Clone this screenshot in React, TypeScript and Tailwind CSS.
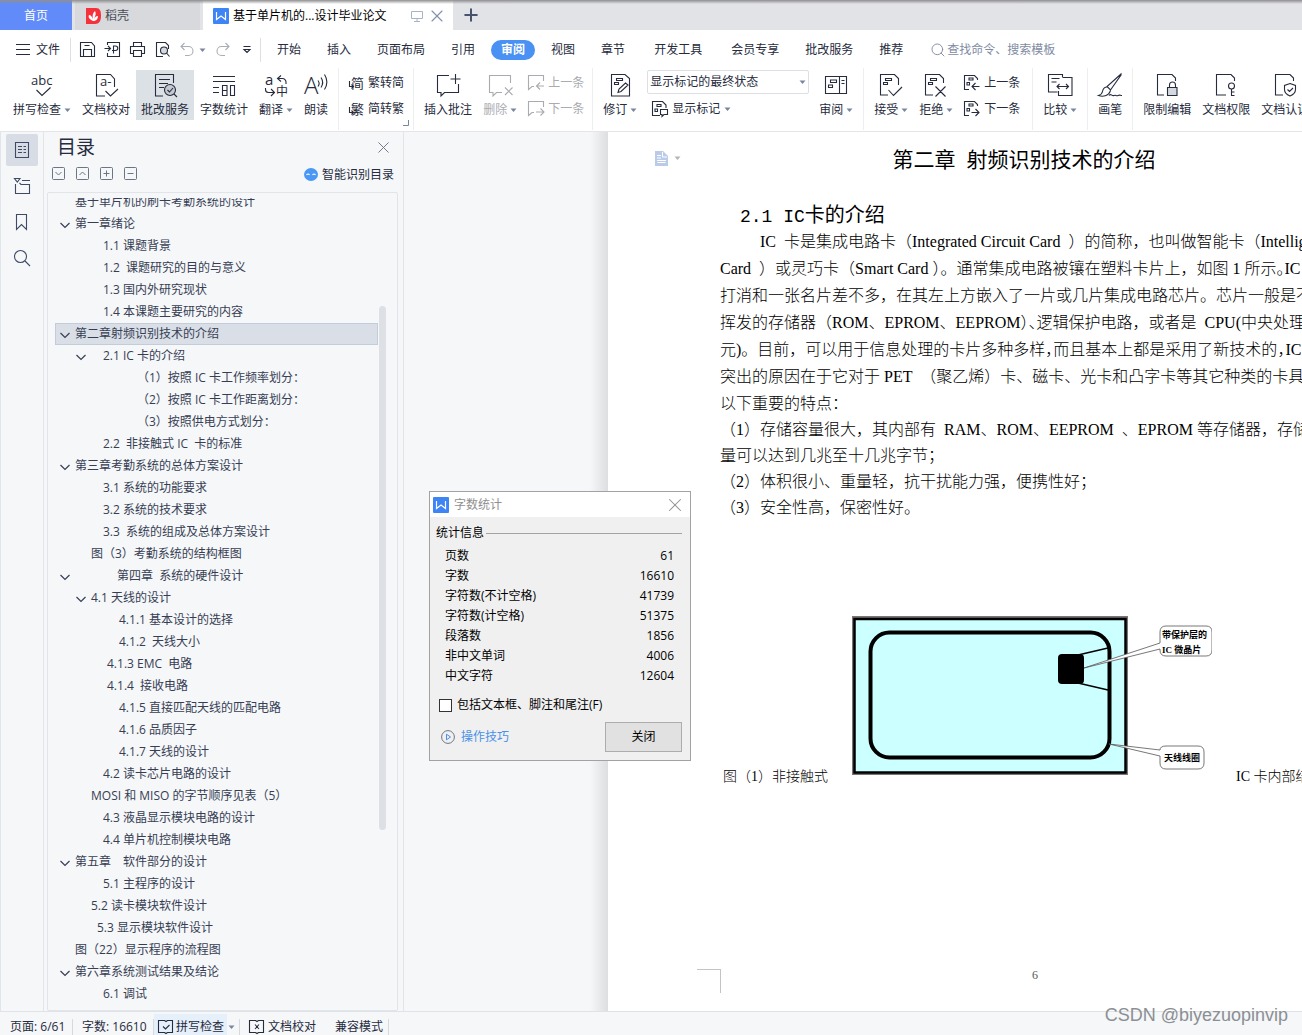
import { Plus, Search, X } from "lucide-react";
import React from "react";

type IconProps = { children: React.ReactNode; size?: "md" | "lg" };

// Icon: shared wrapper for the 1px line drawings
const Icon = ({ children, size = "lg" }: IconProps) => (
  <svg
    className={`shrink-0 overflow-visible ${size === "lg" ? "w-6 h-6" : "w-4 h-4"}`}
    viewBox={size === "lg" ? "0 0 24 24" : "0 0 16 16"}
    fill="none"
    stroke="currentColor"
    strokeWidth="1.1"
    aria-hidden="true"
  >
    {children}
  </svg>
);

const Glyph = ({ x, y, size, children }: { x: number; y: number; size: number; children: string }) => (
  <text x={x} y={y} fontSize={size} fill="currentColor" stroke="none">
    {children}
  </text>
);

const Caret = ({ className = "text-[#7a869d]" }: { className?: string }) => (
  <svg className={`w-[7px] h-[7px] shrink-0 ${className}`} viewBox="0 0 7 7" aria-hidden="true">
    <path d="M.5 1.500h6L3.500 5z" fill="currentColor" />
  </svg>
);

const WpsLogo = () => (
  <svg className="w-4 h-4 shrink-0" viewBox="0 0 16 16" aria-hidden="true">
    <rect width="16" height="16" rx="1" fill="#3d84f5" />
    <path d="M3.500 4v7.500L8 8l4.500 3.500V4" fill="none" stroke="#fff" strokeWidth="1.2" />
  </svg>
);

const icons = {
  spell: (
    <Icon>
      <Glyph x={1} y={11} size={13}>abc</Glyph>
      <path d="M6.500 16l5.500 5.500 8.500-8" />
    </Icon>
  ),
  proof: (
    <Icon>
      <path d="M20.500 13V5L16.500.500H2.500v21.500H11M11.500 17l5 5 7.500-7" />
      <Glyph x={6} y={12} size={13}>a-</Glyph>
    </Icon>
  ),
  correct: (
    <Icon>
      <path d="M20.500 9V.500H2.500v21.500H10M6 5.500h11M6 9.500h9M6 13.500h5" />
      <circle cx="17" cy="16" r="5.500" fill="#c3c9d1" />
      <path d="M14.500 16l2 2 3.500-4M21 20l3 3" />
    </Icon>
  ),
  count: (
    <Icon>
      <path d="M1 2.500h22M1 7.500h22M1 13.500h6M1 18.500h6M10.500 11.500h4.500v10h-4.500zM10.500 16.500h4.500M18.500 11.500h4v10h-4z" />
    </Icon>
  ),
  translate: (
    <Icon>
      <Glyph x={1} y={11} size={15}>a</Glyph>
      <Glyph x={12} y={22} size={12}>中</Glyph>
      <path d="M17 1.500l-3.500 3 3.500 3M13.500 4.500h5a3.500 3.500 0 0 1 3.500 3.500v2M1.500 14v1.500a3 3 0 0 0 3 3H10M7 15l3.500 3.500L7 22" />
    </Icon>
  ),
  read: (
    <Icon>
      <path d="M14 6.500a5 5 0 0 1 0 6M17 3.500a9 9 0 0 1 0 10M20.500 .500a14 14 0 0 1 0 15" />
      <g fontWeight="300">
        <Glyph x={0} y={20} size={24}>A</Glyph>
      </g>
    </Icon>
  ),
  comment: (
    <Icon>
      <path d="M13 1.500H1.500v17H5V22l3.500-3.500h14V10M19.500 0v10M14.500 5h10" />
    </Icon>
  ),
  commentDelete: (
    <Icon>
      <path d="M22.500 9V1.500H1.500v17H5V22l3.500-3.500H14M17 13.500l7.500 7.500M24.500 13.500L17 21" />
    </Icon>
  ),
  commentPrev: (
    <Icon size="md">
      <path d="M15.500 6V.500h-15v14l3.500-3H6M16 11H8.500M12 7.500L8.500 11l3.500 3.500" />
    </Icon>
  ),
  commentNext: (
    <Icon size="md">
      <path d="M15.500 6V.500h-15v14l3.500-3H6M8 11h8M12.500 7.500L16 11l-3.500 3.500" />
    </Icon>
  ),
  revise: (
    <Icon>
      <path d="M3.500.500H17l4.500 4v17.500h-18zM8.500 4.500h6v2h-6zM6.500 8.500h4v2h-4zM10 18.500l1-3.500 6.500-6 2.500 2-7 6.500z" />
    </Icon>
  ),
  markup: (
    <Icon size="md">
      <path d="M8 14.500H.500V.500h10L14 4v3M5 3.500h4v2H5zM3 8h2.500v2.500H3zM8.500 8.500h7v5H12l-2 2v-2H8.500z" />
    </Icon>
  ),
  pane: (
    <Icon>
      <path d="M1.500 2.500h21v17h-21zM15.500 2.500v17M17.500 6.500h3M17.500 9.500h3M6.500 6h6v2.500h-6zM4.500 11h4v2.500h-4z" />
    </Icon>
  ),
  accept: (
    <Icon>
      <path d="M19.500 11V4.500l-4-4H1.500v20.500H9M9.500 16l5 5.500 8.500-8.500M6.500 4.500h6v2h-6zM4.500 8.500h4v2h-4z" />
    </Icon>
  ),
  reject: (
    <Icon>
      <path d="M19.500 9V4.500l-4-4H1.500v20.500H9M11.500 12.500l10 10M21.500 12.500l-10 10M6.500 4.500h6v2h-6zM4.500 8.500h4v2h-4z" />
    </Icon>
  ),
  changePrev: (
    <Icon size="md">
      <path d="M13.500 5V3.500l-3-3H.500v14H5M15.500 11.500H8M11.500 8L8 11.500l3.500 3.500M5 3h4v2H5zM3 7.500h2.500V10H3z" />
    </Icon>
  ),
  changeNext: (
    <Icon size="md">
      <path d="M13.500 5V3.500l-3-3H.500v14H5M7.500 11.500H15M11.500 8l3.500 3.500-3.500 3.500M5 3h4v2H5zM3 7.500h2.500V10H3z" />
    </Icon>
  ),
  compare: (
    <Icon>
      <path d="M14.500 3V.500H.500v17.500h9M3.500 4.500h8M3.500 8h5M14.500 3.500h9.500v18H10.500V17M9 12.500h11.500M11.500 10L9 12.500l2.500 2.500M18 10l2.500 2.500L18 15" />
    </Icon>
  ),
  brush: (
    <Icon>
      <path d="M23 0L9 12.500l3.500 3.500L23 1zM9 13c-3 0-4 2-4.500 4.500C4 20 2.500 21 .500 21.500c4 1.500 10 1 12-5M11 21.500c2-2.500 3 1 5 0s2 1 4 0 2 0 4 0" />
    </Icon>
  ),
  restrict: (
    <Icon>
      <path d="M20.500 7V4L17 .500H2.500v20.500H9M14.500 13v-2a3 3 0 0 1 6 0v2" />
      <path d="M12.500 13.500h9.500v8h-9.500z" fill="#d5d9df" />
    </Icon>
  ),
  permission: (
    <Icon>
      <path d="M20.500 7V4L17 .500H2.500v20.500H12M17.500 15v7M17.500 18h3M17.500 21.500h3" />
      <circle cx="17.500" cy="12" r="3" />
    </Icon>
  ),
  certify: (
    <Icon>
      <path d="M20.500 7V4L17 .500H2.500v20.500H10M17 9.500l5.500 2v4c0 3-2 5-5.500 6.500-3.500-1.500-5.500-3.500-5.500-6.500v-4zM14.500 15.500l2 2 3.500-3.500" />
    </Icon>
  ),
  toSimple: (
    <Icon size="md">
      <Glyph x={3} y={13} size={13}>简</Glyph>
      <path d="M1.500 6v5.500h4M3.500 9.500l2 2-2 2" />
    </Icon>
  ),
  toTraditional: (
    <Icon size="md">
      <Glyph x={3} y={13} size={13}>繁</Glyph>
      <path d="M1.500 6v5.500h4M3.500 9.500l2 2-2 2" />
    </Icon>
  ),
};

// ---------- title tabs ----------

const TitleTabs = () => (
  <header className="relative flex h-[30px] shrink-0 bg-[#e2e3e7] text-xs leading-4">
    <button className="w-[72px] bg-[#608bf9] pt-px text-white">首页</button>
    <button className="ml-[3px] flex w-[125px] items-center gap-1 bg-[#d8d9dc] pt-px pl-[11px] text-[#4a4d55]">
      <svg className="w-[15px] h-4" viewBox="0 0 15 16" aria-hidden="true">
        <path d="M0 0h10c4 0 5 3 5 8s-2 8-6 8H0z" fill="#f5323c" />
        <path d="M7 13C3 11 2 9 3 7c2 0 3 2 4 4-1-4 0-6 2-8 1 2 1 4-1 8 1-2 2-3 4-3 0 3-2 5-5 5z" fill="#fff" />
      </svg>
      稻壳
    </button>
    <div className="ml-[3px] flex w-[250px] items-center bg-white pt-[2px] pl-[10px]">
      <WpsLogo />
      <span className="ml-1 w-[174px] text-black">基于单片机的...设计毕业论文</span>
      <svg className="ml-1 w-3 h-3 text-[#aab2c8]" viewBox="0 0 12 12" fill="none" stroke="currentColor" aria-hidden="true">
        <path d="M.500 1.500h11v7H.500zM6 8.500v3M3 11.500h6" />
      </svg>
      <button aria-label="关闭标签" className="ml-1 text-[#8590b0]">
        <X size={20} strokeWidth={1.4} />
      </button>
    </div>
    <button aria-label="新建" className="ml-2 text-[#49536e]">
      <Plus size={20} strokeWidth={2.4} />
    </button>
    <div className="absolute inset-x-0 top-0 h-1 bg-linear-to-b from-[#8f8f91] to-transparent" />
  </header>
);

// ---------- menu row ----------

const menuTabs = [
  { label: "开始" },
  { label: "插入" },
  { label: "页面布局" },
  { label: "引用" },
  { label: "审阅", active: true },
  { label: "视图" },
  { label: "章节" },
  { label: "开发工具", wide: true },
  { label: "会员专享" },
  { label: "批改服务" },
  { label: "推荐" },
];

const MenuRow = () => (
  <div className="flex h-[38px] shrink-0 items-center bg-white pt-[2px] pl-4 text-xs leading-4 text-[#262b3d]">
    <button className="flex items-center gap-[6px]">
      <svg className="w-[14px] h-[14px]" viewBox="0 0 14 14" stroke="currentColor" aria-hidden="true">
        <path d="M0 1.500h14M0 6.500h14M0 11.500h14" />
      </svg>
      文件
    </button>
    <div className="ml-[10px] flex h-6 items-center gap-[9px] border-x border-[#dcdfe4] pr-1 pl-[9px]">
      <button aria-label="保存">
        <Icon size="md">
          <path d="M.500.500h11L14.500 4v10.500H.500zM3.500 14V7.500h8V14M4.500 3.500h5" />
        </Icon>
      </button>
      <button aria-label="输出为PDF">
        <Icon size="md">
          <path d="M2.500 3V.500h12v14h-12V11M-.500 6.500h6M3 4l2.500 2.500L3 9M8.500 11.500V4h2a2 2 0 0 1 0 4.500H7" />
        </Icon>
      </button>
      <button aria-label="打印">
        <Icon size="md">
          <path d="M3.500 4.500V.500h8v4M3.500 11.500h-3v-7h14v7h-3M3.500 8.500h8v6h-8z" />
        </Icon>
      </button>
      <button aria-label="打印预览">
        <Icon size="md">
          <path d="M13.500 7V3.500L10.500 .500H1.500v14H8M11.500 11l3 3.500" />
          <circle cx="9" cy="8.500" r="3.500" fill="#d5d9df" />
        </Icon>
      </button>
      <button aria-label="撤销" className="flex items-center gap-[3px] text-[#a9adb5]">
        <Icon size="md">
          <path d="M4.500 1L1 4.500 4.500 8M1 4.500h7.500a4.500 4.500 0 0 1 0 9H5" />
        </Icon>
        <Caret />
      </button>
      <button aria-label="重做" className="text-[#a9adb5]">
        <Icon size="md">
          <path d="M10.500 1L14 4.500 10.500 8M14 4.500H6.500a4.500 4.500 0 0 0 0 9H10" />
        </Icon>
      </button>
      <button aria-label="自定义快速访问">
        <Icon size="md">
          <path d="M3.500 4.500h7M4 7.500l3 3 3-3z" />
        </Icon>
      </button>
    </div>
    <nav className="ml-4 flex items-center gap-[26px]">
      {menuTabs.map((tab) => (
        <button
          key={tab.label}
          className={
            tab.active
              ? "-mx-[10px] h-5 rounded-full bg-[#4991f2] px-[10px] font-bold text-white"
              : tab.wide
                ? "mx-[3px]"
                : ""
          }
        >
          {tab.label}
        </button>
      ))}
    </nav>
    <label className="ml-[27px] flex items-center gap-px text-[#7f8ba3]">
      <Search size={16} strokeWidth={1.4} />
      <input
        aria-label="查找命令"
        className="w-40 outline-none placeholder:text-[#7f8ba3]"
        placeholder="查找命令、搜索模板"
      />
    </label>
  </div>
);

// ---------- ribbon ----------

interface RibbonButtonProps {
  icon: React.ReactNode;
  label: string;
  caret?: boolean;
  active?: boolean;
  disabled?: boolean;
}

const RibbonButton = ({ icon, label, caret, active, disabled }: RibbonButtonProps) => (
  <button
    disabled={disabled}
    className={`flex h-[50px] shrink-0 flex-col items-center gap-1 px-[5px] pt-1 ${active ? "bg-[#dce1e6]" : ""} ${disabled ? "text-[#a9abb0]" : ""}`}
  >
    {icon}
    <span className="flex items-center gap-[3px]">
      {label}
      {caret && <Caret />}
    </span>
  </button>
);

const SmallButton = ({ icon, label, caret, disabled }: RibbonButtonProps) => (
  <button
    disabled={disabled}
    className={`flex h-6 shrink-0 items-center gap-1 px-[5px] pt-[2px] ${disabled ? "text-[#a9abb0]" : ""}`}
  >
    {icon}
    {label}
    {caret && <Caret />}
  </button>
);

const Group = ({ children, className = "px-[5px]" }: { children: React.ReactNode; className?: string }) => (
  <div className={`relative flex h-[62px] shrink-0 gap-px border-r border-[#eceef0] pt-[2px] ${className}`}>
    {children}
  </div>
);

const Ribbon = () => (
  <div className="relative z-10 flex h-16 shrink-0 overflow-hidden whitespace-nowrap border-b border-[#e3e5e8] bg-white text-xs leading-4 text-[#262b3d]">
    <Group className="pl-2 pr-[5px]">
      <RibbonButton icon={icons.spell} label="拼写检查" caret />
      <RibbonButton icon={icons.proof} label="文档校对" />
      <RibbonButton icon={icons.correct} label="批改服务" active />
      <RibbonButton icon={icons.count} label="字数统计" />
      <RibbonButton icon={icons.translate} label="翻译" caret />
      <RibbonButton icon={icons.read} label="朗读" />
    </Group>
    <Group className="px-1">
      <div className="flex flex-col gap-[2px]">
        <SmallButton icon={icons.toSimple} label="繁转简" />
        <SmallButton icon={icons.toTraditional} label="简转繁" />
      </div>
      <svg className="absolute right-1 bottom-1 w-[6px] h-[6px] text-[#7a869d]" viewBox="0 0 6 6" fill="none" stroke="currentColor" aria-hidden="true">
        <path d="M5.500 0v5.500H0" />
      </svg>
    </Group>
    <Group className="pl-[5px] pr-[3px]">
      <RibbonButton icon={icons.comment} label="插入批注" />
      <RibbonButton icon={icons.commentDelete} label="删除" caret disabled />
      <div className="flex flex-col gap-[2px]">
        <SmallButton icon={icons.commentPrev} label="上一条" disabled />
        <SmallButton icon={icons.commentNext} label="下一条" disabled />
      </div>
    </Group>
    <Group>
      <RibbonButton icon={icons.revise} label="修订" caret />
      <div className="mx-1 flex flex-col gap-[2px]">
        <div className="relative">
          <select
            aria-label="显示标记"
            className="h-6 w-[162px] appearance-none rounded-xs border border-[#dcdfe4] bg-white pl-[2px] text-xs"
          >
            <option>显示标记的最终状态</option>
          </select>
          <span className="pointer-events-none absolute top-[9px] right-[3px]">
            <Caret />
          </span>
        </div>
        <SmallButton icon={icons.markup} label="显示标记" caret />
      </div>
      <RibbonButton icon={icons.pane} label="审阅" caret />
    </Group>
    <Group className="pl-[5px] pr-[7px]">
      <RibbonButton icon={icons.accept} label="接受" caret />
      <RibbonButton icon={icons.reject} label="拒绝" caret />
      <div className="flex flex-col gap-[2px]">
        <SmallButton icon={icons.changePrev} label="上一条" />
        <SmallButton icon={icons.changeNext} label="下一条" />
      </div>
    </Group>
    <Group>
      <RibbonButton icon={icons.compare} label="比较" caret />
    </Group>
    <Group>
      <RibbonButton icon={icons.brush} label="画笔" />
    </Group>
    <Group>
      <RibbonButton icon={icons.restrict} label="限制编辑" />
      <RibbonButton icon={icons.permission} label="文档权限" />
      <RibbonButton icon={icons.certify} label="文档认证" />
    </Group>
  </div>
);

// ---------- left side ----------

const SideStrip = () => (
  <aside className="flex w-11 shrink-0 flex-col items-center gap-1 border-x border-[#e1e4e9] pt-[2px] text-[#3f4a66]">
    <button aria-label="目录" className="flex size-8 items-center justify-center rounded-xs bg-[#d8dde5]">
      <Icon size="md">
        <path d="M1.500.500h13v15h-13zM4 4.500h4M4 7.500h4M4 10.500h4M9.500 4.500H12M9.500 7.500H12M9.500 10.500H12" />
      </Icon>
    </button>
    <button aria-label="章节" className="flex size-8 items-center justify-center">
      <Icon size="md">
        <path d="M.500.500h5.500L3.300 4zM8 2.500h8M1.500 6v9.500h14v-9H7L5.500 5" />
      </Icon>
    </button>
    <button aria-label="书签" className="flex size-8 items-center justify-center">
      <Icon size="md">
        <path d="M2.500.500h10v15l-5-5-5 5z" />
      </Icon>
    </button>
    <button aria-label="查找" className="flex size-8 items-center justify-center">
      <Icon size="md">
        <circle cx="6.500" cy="6.500" r="6" />
        <path d="M11 11l5 5" />
      </Icon>
    </button>
  </aside>
);

interface OutlineItem {
  text: string;
  indent: string;
  chevron?: string;
  selected?: boolean;
}

const outline: OutlineItem[] = [
  { text: "基于单片机的刷卡考勤系统的设计", indent: "pl-5" },
  { text: "第一章绪论", indent: "pl-5", chevron: "left-1" },
  { text: "1.1 课题背景", indent: "pl-12" },
  { text: "1.2  课题研究的目的与意义", indent: "pl-12" },
  { text: "1.3 国内外研究现状", indent: "pl-12" },
  { text: "1.4 本课题主要研究的内容", indent: "pl-12" },
  { text: "第二章射频识别技术的介绍", indent: "pl-5", chevron: "left-1", selected: true },
  { text: "2.1 IC 卡的介绍", indent: "pl-12", chevron: "left-5" },
  { text: "（1）按照 IC 卡工作频率划分：", indent: "pl-[82px]" },
  { text: "（2）按照 IC 卡工作距离划分：", indent: "pl-[82px]" },
  { text: "（3）按照供电方式划分：", indent: "pl-[82px]" },
  { text: "2.2  非接触式 IC  卡的标准", indent: "pl-12" },
  { text: "第三章考勤系统的总体方案设计", indent: "pl-5", chevron: "left-1" },
  { text: "3.1 系统的功能要求", indent: "pl-12" },
  { text: "3.2 系统的技术要求", indent: "pl-12" },
  { text: "3.3  系统的组成及总体方案设计", indent: "pl-12" },
  { text: "图（3）考勤系统的结构框图", indent: "pl-9" },
  { text: "第四章  系统的硬件设计", indent: "pl-[62px]", chevron: "left-1" },
  { text: "4.1 天线的设计", indent: "pl-9", chevron: "left-5" },
  { text: "4.1.1 基本设计的选择", indent: "pl-16" },
  { text: "4.1.2  天线大小", indent: "pl-16" },
  { text: "4.1.3 EMC  电路", indent: "pl-13" },
  { text: "4.1.4  接收电路", indent: "pl-13" },
  { text: "4.1.5 直接匹配天线的匹配电路", indent: "pl-16" },
  { text: "4.1.6 品质因子", indent: "pl-16" },
  { text: "4.1.7 天线的设计", indent: "pl-16" },
  { text: "4.2 读卡芯片电路的设计", indent: "pl-12" },
  { text: "MOSI 和 MISO 的字节顺序见表（5）", indent: "pl-9" },
  { text: "4.3 液晶显示模块电路的设计", indent: "pl-12" },
  { text: "4.4 单片机控制模块电路", indent: "pl-12" },
  { text: "第五章　软件部分的设计", indent: "pl-5", chevron: "left-1" },
  { text: "5.1 主程序的设计", indent: "pl-12" },
  { text: "5.2 读卡模块软件设计", indent: "pl-9" },
  { text: "5.3 显示模块软件设计", indent: "pl-[42px]" },
  { text: "图（22）显示程序的流程图", indent: "pl-5" },
  { text: "第六章系统测试结果及结论", indent: "pl-5", chevron: "left-1" },
  { text: "6.1 调试", indent: "pl-12" },
];

const levelTools = [
  { label: "展开", d: "M3.500 5l3 3 3-3" },
  { label: "收缩", d: "M3.500 8l3-3 3 3" },
  { label: "升级", d: "M3.500 6.500h6M6.500 3.500v6" },
  { label: "降级", d: "M3.500 6.500h6" },
];

const OutlinePanel = () => (
  <section className="flex w-[360px] shrink-0 flex-col border-r border-[#e1e4e9] text-[#373e54]">
    <div className="flex h-7 items-center justify-between pt-[2px] pr-[10px] pl-[13px]">
      <h2 className="text-[19px] leading-7 text-[#262b3d]">目录</h2>
      <button aria-label="关闭目录" className="text-[#6d7484]">
        <X size={19} strokeWidth={1.2} />
      </button>
    </div>
    <div className="flex h-[27px] items-center gap-[11px] pr-[9px] pl-2">
      {levelTools.map((tool) => (
        <button key={tool.label} aria-label={tool.label} className="text-[#6d7484]">
          <svg className="w-[13px] h-[13px]" viewBox="0 0 13 13" fill="none" stroke="currentColor" aria-hidden="true">
            <rect x=".5" y=".5" width="12" height="12" rx="1" />
            <path d={tool.d} />
          </svg>
        </button>
      ))}
      <button className="ml-auto flex items-center gap-1 pt-[2px] text-xs leading-4 text-[#262b3d]">
        <svg className="w-[14px] h-[14px]" viewBox="0 0 14 14" aria-hidden="true">
          <ellipse cx="7" cy="6.500" rx="7" ry="6.500" fill="#4a97f5" />
          <path d="M2.500 7q1.500-2 3 0M8.500 7q1.500-2 3 0" fill="none" stroke="#fff" strokeWidth="1.200" />
        </svg>
        智能识别目录
      </button>
    </div>
    <div className="mt-[5px] mr-[5px] ml-[3px] flex min-h-0 flex-1 rounded-xs border border-[#e1e4e9] pt-[5px] pl-[7px]">
      <div className="min-h-0 flex-1 overflow-hidden">
        <ul className="-mt-[7px] text-xs">
          {outline.map((item) => (
            <li
              key={item.text}
              className={`relative h-[22px] whitespace-pre leading-[22px] ${item.indent} ${item.selected ? "bg-[#d9dee7] outline outline-[#c3ccd9] -outline-offset-1" : ""}`}
            >
              {item.chevron && (
                <svg className={`absolute top-2 w-3 h-2 ${item.chevron}`} viewBox="0 0 12 8" fill="none" stroke="currentColor" strokeWidth="1.200" aria-hidden="true">
                  <path d="M1.500 2L6 6.500 10.500 2" />
                </svg>
              )}
              <a href="#page">{item.text}</a>
            </li>
          ))}
        </ul>
      </div>
      <div className="mr-[11px] flex w-2 flex-col pt-[108px] pb-[180px]">
        <div className="ml-auto w-[7px] flex-1 rounded-full bg-[#dde1e5]" />
      </div>
    </div>
  </section>
);

// ---------- document ----------

// Half: full-width punctuation set in its half-width form at the end of a clause
const Half = ({ children }: { children: string }) => (
  <span className="[font-feature-settings:'halt']">{children}</span>
);

const introLines: React.ReactNode[] = [
  <>IC  卡是集成电路卡（Integrated Circuit Card  ）的简称，也叫做智能卡（Intelligent</>,
  <>Card  ）或灵巧卡（Smart Card ）。通常集成电路被镶在塑料卡片上，如图 1 所示<Half>。</Half>IC 卡的</>,
  <>打消和一张名片差不多，在其左上方嵌入了一片或几片集成电路芯片。芯片一般是不易</>,
  <>挥发的存储器（ROM、EPROM、EEPROM<Half>）、</Half>逻辑保护电路，或者是  CPU(中央处理单</>,
  <>元)。目前，可以用于信息处理的卡片多种多样<Half>，</Half>而且基本上都是采用了新技术的<Half>，</Half>IC 卡</>,
  <>突出的原因在于它对于 PET  （聚乙烯）卡、磁卡、光卡和凸字卡等其它种类的卡具有</>,
  <>以下重要的特点：</>,
];

const featureLines = [
  "（1）存储容量很大，其内部有  RAM、ROM、EEPROM  、EPROM 等存储器，存储容",
  "量可以达到几兆至十几兆字节；",
  "（2）体积很小、重量轻，抗干扰能力强，便携性好；",
  "（3）安全性高，保密性好。",
];

const CardFigure = () => (
  <svg className="w-[360px] h-[160px] shrink-0" viewBox="0 0 360 160" role="img" aria-label="非接触式IC卡内部结构">
    <rect x="1" y="1" width="274" height="157" fill="#ccffff" stroke="#777" strokeWidth="2" />
    <rect x="2.500" y="3" width="271" height="153.500" fill="none" stroke="#000" strokeWidth="2.500" />
    <rect x="18.500" y="16.500" width="239" height="125" rx="19" fill="none" stroke="#000" strokeWidth="4" />
    <path d="M226 39l30-7M226 67l30 7" stroke="#000" strokeWidth="1.300" />
    <rect x="206" y="38" width="26" height="30" rx="4" fill="#000" />
    <path
      d="M314 10h40q6 0 6 6v18q0 6-6 6h-40q-6 0-6-6l0-1-76 19 76-25v-11q0-6 6-6z"
      fill="#fff"
      stroke="#555"
      strokeWidth=".8"
    />
    <path
      d="M314 130h32q6 0 6 6v11q0 6-6 6h-32q-6 0-6-6v-7l-51-12 51 6q0-4 6-4z"
      fill="#fff"
      stroke="#555"
      strokeWidth=".8"
    />
    <g className="font-['Liberation_Serif','Noto_Sans_CJK_SC',serif] font-bold" fontSize="9">
      <text x="310" y="22">带保护层的</text>
      <text x="310" y="37">IC 微晶片</text>
      <text x="312" y="145">天线线圈</text>
    </g>
  </svg>
);

const DocumentArea = () => (
  <main id="page" className="flex min-w-0 flex-1 overflow-hidden">
    <div className="w-[186px] shrink-0" />
    <div className="w-[18px] shrink-0 bg-linear-to-r from-[#f5f7f9] to-[#dcdee0]" />
    <article className="relative flex w-[832px] shrink-0 flex-col bg-white pt-[13px] pl-28 text-black">
      <button aria-label="段落布局" className="absolute top-[19px] left-[47px] flex items-center gap-[6px]">
        <svg className="w-[13px] h-[15px]" viewBox="0 0 13 15" aria-hidden="true">
          <path d="M0 0h8l5 5v10H0z" fill="#b9cbe8" />
          <path d="M7.500 1v5H12M2 4.500h4M2 7h4M2 9.500h9M2.500 11.500h8" fill="none" stroke="#fff" />
        </svg>
        <Caret className="text-[#b5b5b5]" />
      </button>
      <h1 className="whitespace-pre pr-28 text-center text-[21px] leading-7">第二章  射频识别技术的介绍</h1>
      <h2 className="mt-[30px] flex h-[25px] items-baseline pl-5 text-xl leading-6">
        <span className="font-['Liberation_Mono',monospace] text-lg leading-6">2.1 IC</span>卡的介绍
      </h2>
      <div className="whitespace-pre font-['Liberation_Serif','Noto_Sans_CJK_SC',serif] text-base font-light">
        {introLines.map((line, index) => (
          <p key={index} className={`h-[27px] leading-[27px] ${index === 0 ? "pl-10" : ""}`}>
            {line}
          </p>
        ))}
        {featureLines.map((line) => (
          <p key={line} className="h-[26px] leading-[26px]">
            {line}
          </p>
        ))}
      </div>
      <div className="mt-[95px] flex items-end gap-6 whitespace-nowrap pl-[3px] font-['Liberation_Serif','Noto_Sans_CJK_SC',serif] text-sm font-light">
        <span className="-mb-[9px] leading-4">图（1）非接触式</span>
        <CardFigure />
        <span className="-mb-[9px] leading-4">IC 卡内部结构</span>
      </div>
      <footer className="mt-auto mb-[18px] -ml-[23px] flex h-6 text-[#555]">
        <div className="w-6 border-t border-r border-[#c4c4c4]" />
        <span className="ml-[311px] font-['Liberation_Serif',serif] text-xs leading-3">6</span>
      </footer>
    </article>
  </main>
);

// ---------- word count dialog ----------

const stats = [
  ["页数", "61"],
  ["字数", "16610"],
  ["字符数(不计空格)", "41739"],
  ["字符数(计空格)", "51375"],
  ["段落数", "1856"],
  ["非中文单词", "4006"],
  ["中文字符", "12604"],
];

const WordCountDialog = () => (
  <div
    role="dialog"
    aria-label="字数统计"
    className="absolute top-[491px] left-[429px] z-20 w-[262px] border border-[#a0a2a5] bg-[#f0f0f0] text-xs leading-4 text-black"
  >
    <div className="flex h-[25px] items-center bg-white pr-1 pl-[3px]">
      <WpsLogo />
      <span className="ml-[5px] text-[#8f8f8f]">字数统计</span>
      <button aria-label="关闭" className="ml-auto text-[#8f8f8f]">
        <X size={22} strokeWidth={1.1} />
      </button>
    </div>
    <div className="pt-2 pr-2 pb-2 pl-[6px]">
      <div className="flex items-center gap-[2px]">
        统计信息
        <span className="h-px flex-1 bg-[#a3a3a3]" />
      </div>
      <table className="mt-[5px] w-full">
        <tbody>
          {stats.map(([name, value]) => (
            <tr key={name} className="h-5">
              <th className="pl-[9px] text-left font-normal">{name}</th>
              <td className="pr-2 text-right">{value}</td>
            </tr>
          ))}
        </tbody>
      </table>
      <label className="mt-[11px] flex items-center gap-[5px] pl-[3px]">
        <input type="checkbox" className="size-[13px] appearance-none border border-[#333] bg-white" />
        包括文本框、脚注和尾注(F)
      </label>
      <div className="mt-[9px] flex items-center justify-between pl-[5px]">
        <a href="#tips" className="flex items-center gap-[6px] text-[#4a90e8]">
          <svg className="w-[14px] h-[14px]" viewBox="0 0 14 14" fill="none" aria-hidden="true">
            <circle cx="7" cy="7" r="6.400" stroke="#6d7484" />
            <path d="M5.500 4.200v5.600l4-2.800z" stroke="#4a90e8" />
          </svg>
          操作技巧
        </a>
        <button className="h-[30px] w-[77px] border border-[#adadad] bg-[#e1e1e1]">关闭</button>
      </div>
    </div>
  </div>
);

// ---------- status bar ----------

const StatusBar = () => (
  <footer className="flex h-6 shrink-0 items-end border-t border-[#dfe2e6] bg-[#f5f7f9] text-xs leading-4 text-[#262b3d]">
    <span className="w-[73px] border-r border-[#d6dade] pl-[10px]">页面: 6/61</span>
    <span className="w-[81px] border-r border-[#d6dade] pl-[9px]">字数: 16610</span>
    <button className="flex h-[21px] items-end gap-[2px] bg-[#e6f0fb] pr-[3px] pl-1">
      <Icon size="md">
        <path d="M.500 1.500h6l1.500 1 1.500-1h5v12h-5l-1.500 1-1.500-1h-6zM5 7.500l2.500 2.500L11.500 6" />
      </Icon>
      拼写检查
    </button>
    <span className="flex h-4 w-[13px] items-center border-r border-[#d6dade] pl-px">
      <Caret />
    </span>
    <button className="flex items-end gap-[3px] pl-[9px]">
      <Icon size="md">
        <path d="M.500 1.500h6l1.500 1 1.500-1h5v12h-5l-1.500 1-1.500-1h-6zM6 5.500l4 4.500M10 5.500L6 10" />
      </Icon>
      文档校对
    </button>
    <button className="ml-[19px] border-r border-[#d6dade] pr-[5px]">兼容模式</button>
  </footer>
);

export default function App() {
  return (
    <div className="relative flex h-screen flex-col overflow-hidden bg-[#f5f7f9] font-['Open_Sans','Noto_Sans_CJK_SC',sans-serif]">
      <TitleTabs />
      <MenuRow />
      <Ribbon />
      <div className="flex min-h-0 flex-1">
        <SideStrip />
        <OutlinePanel />
        <DocumentArea />
      </div>
      <StatusBar />
      <WordCountDialog />
      <div className="pointer-events-none absolute right-[14px] bottom-[6px] font-['Liberation_Sans',sans-serif] text-lg text-[#8c8f93]">
        CSDN @biyezuopinvip
      </div>
    </div>
  );
}
